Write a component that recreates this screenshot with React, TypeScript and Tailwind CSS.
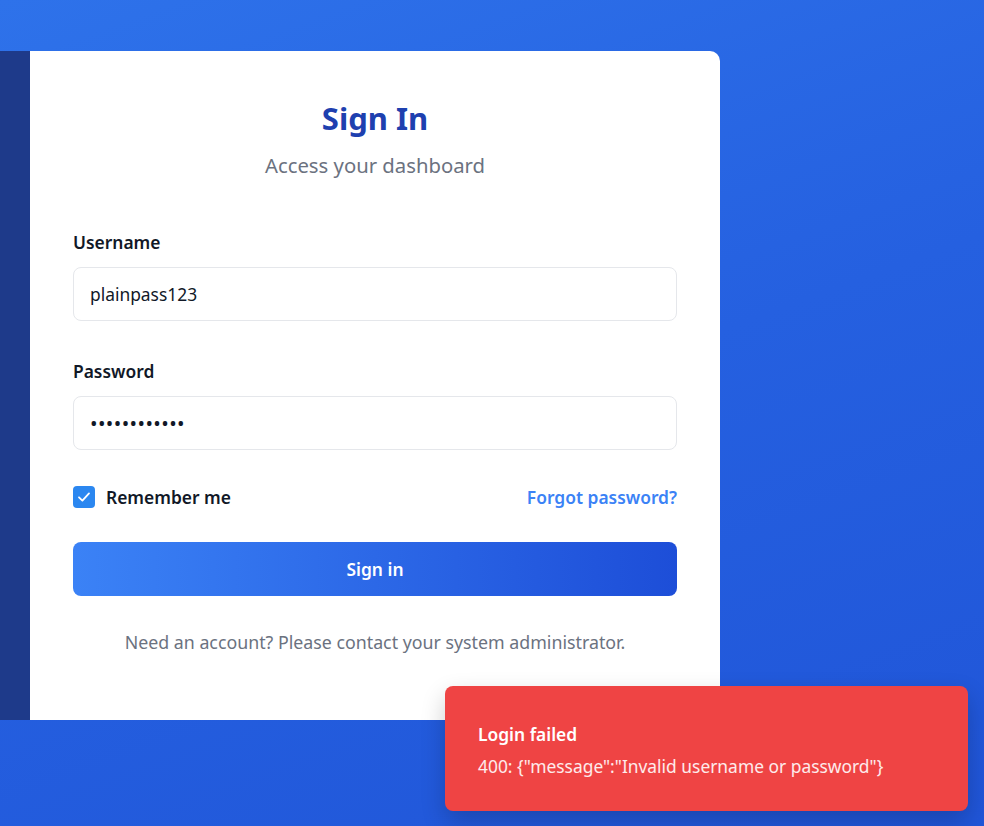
import React from "react";

export default function App() {
  return (
    <div
      className="relative w-[984px] h-[826px] overflow-hidden bg-[linear-gradient(160deg,#2e72ea_0%,#2560e0_50%,#2055d8_100%)]"
      style={{ fontFamily: '"Noto Sans", "Open Sans", sans-serif' }}
    >
      <div className="pt-[51px]">
        <div className="flex w-[720px] h-[669px]">
          <div className="w-[30px] bg-[#1e3a8a]" />
          <div className="flex-1 bg-white rounded-tr-[10px] rounded-br-[10px] px-[43px] pt-[48px]">
            <h1 className="text-center text-[31px] leading-[38px] font-bold text-[#1e40af]">Sign In</h1>
            <p className="text-center text-[20.3px] leading-[28px] text-[#6b7280] mt-[14px]">Access your dashboard</p>

            <form className="mt-[51px] flex flex-col" onSubmit={(e) => e.preventDefault()}>
              <label className="text-[17.4px] leading-[24px] font-semibold text-[#111827]">Username</label>
              <input
                readOnly
                value="plainpass123"
                className="mt-[13px] h-[54px] w-full rounded-[8px] border border-[#e5e7eb] px-[16px] text-[17.4px] text-[#111827] outline-none"
              />
              <label className="mt-[38px] text-[17.4px] leading-[24px] font-semibold text-[#111827]">Password</label>
              <input
                readOnly
                type="password"
                value="plainpass123"
                className="mt-[13px] h-[54px] w-full rounded-[8px] border border-[#e5e7eb] px-[16px] text-[20px] tracking-[0.4px] text-[#111827] outline-none"
              />
              <div className="mt-[35px] flex items-center justify-between h-[24px]">
                <div className="flex items-center gap-[11px]">
                  <span className="w-[22px] h-[22px] rounded-[4px] bg-[#2b87f0] flex items-center justify-center">
                    <svg width="16" height="16" viewBox="0 0 16 16" fill="none">
                      <path d="M3 8.3 L6.4 11.6 L13 4.4" stroke="white" strokeWidth="1.8" strokeLinecap="round" strokeLinejoin="round" />
                    </svg>
                  </span>
                  <span className="text-[17.4px] font-semibold text-[#111827]">Remember me</span>
                </div>
                <span className="text-[17.4px] font-semibold text-[#3b82f6]">Forgot password?</span>
              </div>
              <button
                type="submit"
                className="mt-[33px] h-[54px] w-full rounded-[8px] bg-[linear-gradient(90deg,#3b82f6,#1d4ed8)] text-white text-[17.4px] font-semibold"
              >
                Sign in
              </button>
              <p className="mt-[34px] text-center text-[17.8px] leading-[24px] text-[#6b7280]">
                Need an account? Please contact your system administrator.
              </p>
            </form>
          </div>
        </div>
      </div>

      <div className="absolute left-[445px] top-[686px] w-[523px] h-[125px] rounded-[8px] bg-[#ef4444] shadow-[0_10px_25px_rgba(0,0,0,0.2)] pl-[33px] pt-[35px]">
        <div className="text-[17.4px] leading-[26px] font-semibold text-white">Login failed</div>
        <div className="mt-[6px] text-[17.4px] leading-[26px] text-white/90">
          400: {"{"}"message":"Invalid username or password"{"}"}
        </div>
      </div>
    </div>
  );
}
